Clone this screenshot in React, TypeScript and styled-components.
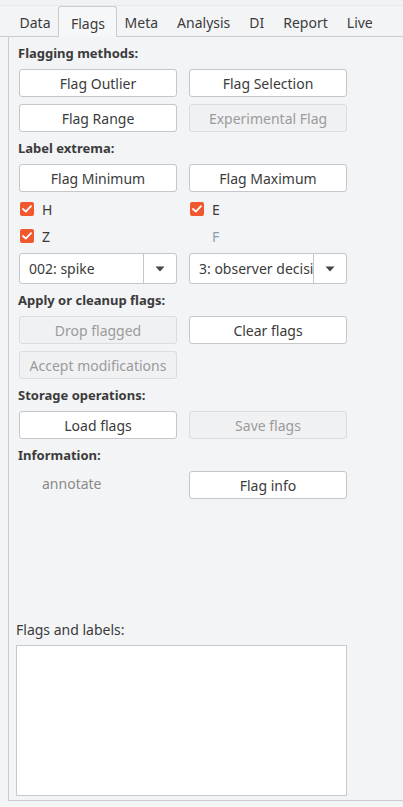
import React from "react";
import styled, { createGlobalStyle } from "styled-components";

const Global = createGlobalStyle`
  html, body { margin: 0; padding: 0; background: #f3f4f6; }
  body { font-family: "Noto Sans", "DejaVu Sans", sans-serif; color: #3b3b3b; }
  #root { height: 807px; }
`;

const Window = styled.div`
  width: 403px;
  height: 807px;
  display: flex;
  flex-direction: column;
  background: #f3f4f6;
  overflow: hidden;
`;

const TopStrip = styled.div`
  height: 5px;
  border-bottom: 1px solid #e7e9ec;
  background: #f1f2f4;
`;

const TabBar = styled.div`
  height: 30px;
  display: flex;
  align-items: stretch;
  padding-left: 10px;
  border-bottom: 1px solid #c9ccd0;
`;

const Tab = styled.div<{ $active?: boolean }>`
  display: flex;
  align-items: center;
  font-size: 14px;
  color: #3b3b3b;
  padding: ${(p) => (p.$active ? "3px 11px 0 12px" : "3px 9.5px 0")};
  margin: ${(p) => (p.$active ? "0 -2px -1px -2px" : "0")};
  background: ${(p) => (p.$active ? "#f6f7f8" : "transparent")};
  border: ${(p) => (p.$active ? "1px solid #c9ccd0" : "none")};
  border-bottom: none;
  border-radius: ${(p) => (p.$active ? "3px 3px 0 0" : "0")};
`;

const Pane = styled.div`
  margin-left: 8px;
  height: 764px;
  border-left: 1px solid #c9ccd0;
  border-bottom: 1px solid #c9ccd0;
  display: flex;
  flex-direction: column;
  padding: 7px 0 4px 10px;
  box-sizing: border-box;
`;

const Controls = styled.div`
  display: flex;
  flex-direction: column;
  gap: 7px;
`;

const Heading = styled.div`
  height: 18px;
  line-height: 18px;
  font-size: 13px;
  font-weight: 700;
  color: #3b3b3b;
  margin-left: -1px;
`;

const Row = styled.div`
  display: grid;
  grid-template-columns: 158px 158px;
  column-gap: 12px;
`;

const Button = styled.div<{ $disabled?: boolean }>`
  height: 28px;
  box-sizing: border-box;
  border: 1px solid ${(p) => (p.$disabled ? "#dadde0" : "#c3c6ca")};
  border-radius: 3px;
  background: ${(p) => (p.$disabled ? "#f0f1f3" : "#ffffff")};
  color: ${(p) => (p.$disabled ? "#9b9b9b" : "#3b3b3b")};
  font-size: 14px;
  display: flex;
  align-items: center;
  justify-content: center;
  white-space: nowrap;
`;

const CheckRow = styled.label<{ $disabled?: boolean }>`
  height: 20px;
  display: flex;
  align-items: center;
  gap: 8px;
  padding-left: 1px;
  font-size: 14px;
  color: ${(p) => (p.$disabled ? "#8e9ca8" : "#3b3b3b")};
`;

const Box = styled.span<{ $hidden?: boolean }>`
  width: 14px;
  height: 14px;
  border-radius: 2px;
  background: ${(p) => (p.$hidden ? "transparent" : "#f1582f")};
  display: flex;
  align-items: center;
  justify-content: center;
`;

const Select = styled.div`
  height: 31px;
  box-sizing: border-box;
  border: 1px solid #c3c6ca;
  border-radius: 3px;
  background: #ffffff;
  display: grid;
  grid-template-columns: 124px 1fr;
  overflow: hidden;
`;

const SelectText = styled.div`
  font-size: 14px;
  color: #3b3b3b;
  padding-left: 9px;
  display: flex;
  align-items: center;
  white-space: nowrap;
  overflow: hidden;
  border-right: 1px solid #c3c6ca;
`;

const SelectArrow = styled.div`
  display: flex;
  align-items: center;
  justify-content: center;
`;

const InfoLabel = styled.div`
  font-size: 14px;
  color: #8a8a8a;
  padding-left: 23px;
  display: flex;
  align-items: center;
  height: 24px;
`;

const Lower = styled.div`
  margin-top: auto;
  margin-left: -3px;
  display: flex;
  flex-direction: column;
  gap: 6px;
`;

const LowerLabel = styled.div`
  font-size: 14px;
  color: #3b3b3b;
  height: 18px;
  line-height: 18px;
`;

const TextArea = styled.div`
  width: 331px;
  height: 151px;
  box-sizing: border-box;
  background: #ffffff;
  border: 1px solid #c6c9cd;
`;

const Check = () => (
  <svg width="10" height="8" viewBox="0 0 10 8">
    <path d="M1 4 L3.8 6.6 L9 1.2" fill="none" stroke="#fff" strokeWidth="1.8" strokeLinecap="round" strokeLinejoin="round" />
  </svg>
);

const Arrow = () => (
  <svg width="10" height="6" viewBox="0 0 10 6">
    <path d="M0.5 0.5 L9.5 0.5 L5 5.5 Z" fill="#454545" />
  </svg>
);

const CheckItem = ({ label, checked = true, disabled = false }: { label: string; checked?: boolean; disabled?: boolean }) => (
  <CheckRow $disabled={disabled}>
    <Box $hidden={!checked}>{checked && <Check />}</Box>
    {label}
  </CheckRow>
);

const DropDown = ({ value }: { value: string }) => (
  <Select>
    <SelectText>{value}</SelectText>
    <SelectArrow>
      <Arrow />
    </SelectArrow>
  </Select>
);

export default function App() {
  const tabs = ["Data", "Flags", "Meta", "Analysis", "DI", "Report", "Live"];
  return (
    <Window>
      <Global />
      <TopStrip />
      <TabBar>
        {tabs.map((t) => (
          <Tab key={t} $active={t === "Flags"}>
            {t}
          </Tab>
        ))}
      </TabBar>
      <Pane>
        <Controls>
          <Heading>Flagging methods:</Heading>
          <Row>
            <Button>Flag Outlier</Button>
            <Button>Flag Selection</Button>
          </Row>
          <Row>
            <Button>Flag Range</Button>
            <Button $disabled>Experimental Flag</Button>
          </Row>
          <Heading>Label extrema:</Heading>
          <Row>
            <Button>Flag Minimum</Button>
            <Button>Flag Maximum</Button>
          </Row>
          <Row>
            <CheckItem label="H" />
            <CheckItem label="E" />
          </Row>
          <Row>
            <CheckItem label="Z" />
            <CheckItem label="F" checked={false} disabled />
          </Row>
          <Row>
            <DropDown value="002: spike" />
            <DropDown value="3: observer decision" />
          </Row>
          <Heading>Apply or cleanup flags:</Heading>
          <Row>
            <Button $disabled>Drop flagged</Button>
            <Button>Clear flags</Button>
          </Row>
          <Row>
            <Button $disabled>Accept modifications</Button>
          </Row>
          <Heading>Storage operations:</Heading>
          <Row>
            <Button>Load flags</Button>
            <Button $disabled>Save flags</Button>
          </Row>
          <Heading>Information:</Heading>
          <Row>
            <InfoLabel>annotate</InfoLabel>
            <Button>Flag info</Button>
          </Row>
        </Controls>
        <Lower>
          <LowerLabel>Flags and labels:</LowerLabel>
          <TextArea />
        </Lower>
      </Pane>
    </Window>
  );
}
